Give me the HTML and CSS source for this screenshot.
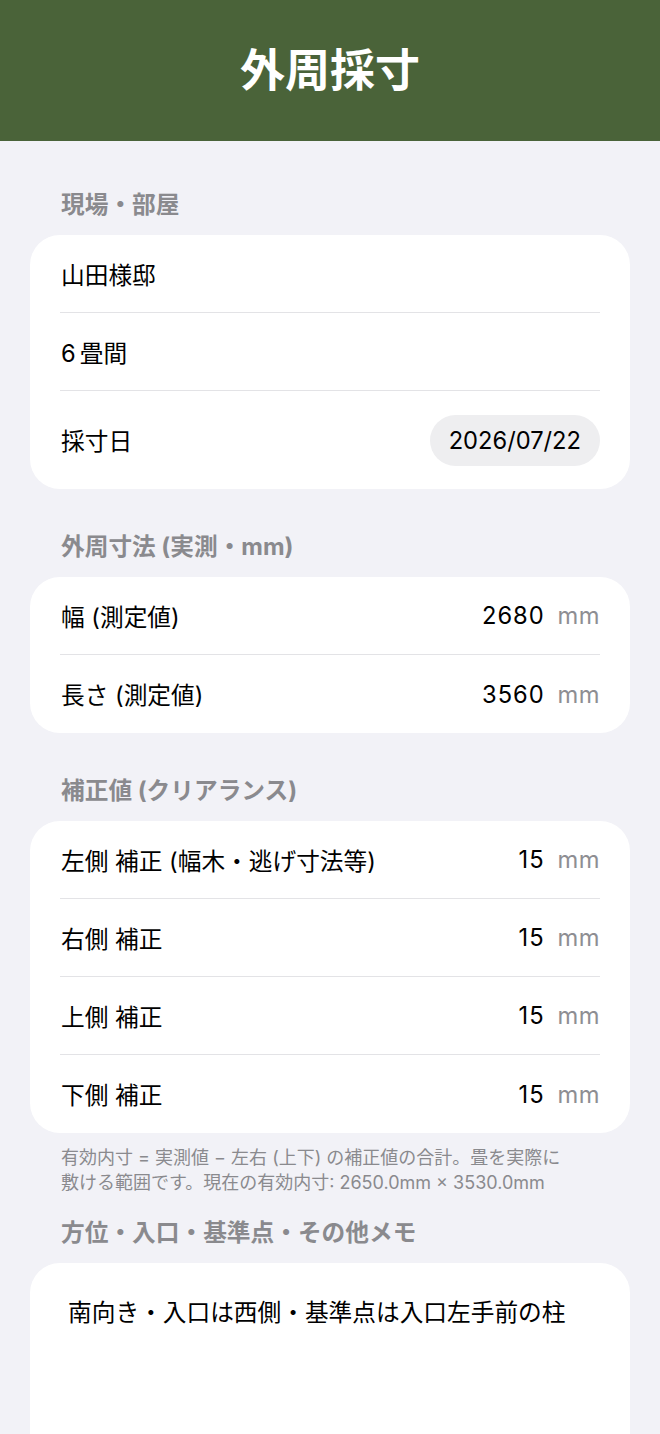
FILE: index.html
```html
<!DOCTYPE html>
<html lang="ja">
<head>
<meta charset="utf-8">
<title>外周採寸</title>
<link rel="stylesheet" href="styles.css">
</head>
<body>
<header class="topbar"><h1 class="title">外周採寸</h1></header>
<main class="content">
  <section class="group">
    <h2 class="group-title">現場・部屋</h2>
    <div class="card">
      <div class="row"><span class="label">山田様邸</span></div>
      <div class="row"><span class="label"><span class="num">6</span>畳間</span></div>
      <div class="row row-tall"><span class="label">採寸日</span><span class="pill">2026/07/22</span></div>
    </div>
  </section>
  <section class="group">
    <h2 class="group-title">外周寸法 (実測・mm)</h2>
    <div class="card">
      <div class="row"><span class="label">幅 (測定値)</span><span class="value">2680<span class="unit">mm</span></span></div>
      <div class="row"><span class="label">長さ (測定値)</span><span class="value">3560<span class="unit">mm</span></span></div>
    </div>
  </section>
  <section class="group">
    <h2 class="group-title">補正値 (クリアランス)</h2>
    <div class="card">
      <div class="row"><span class="label">左側 補正 (幅木・逃げ寸法等)</span><span class="value">15<span class="unit">mm</span></span></div>
      <div class="row"><span class="label">右側 補正</span><span class="value">15<span class="unit">mm</span></span></div>
      <div class="row"><span class="label">上側 補正</span><span class="value">15<span class="unit">mm</span></span></div>
      <div class="row"><span class="label">下側 補正</span><span class="value">15<span class="unit">mm</span></span></div>
    </div>
    <p class="note">有効内寸 = 実測値 − 左右 (上下) の補正値の合計。畳を実際に敷ける範囲です。現在の有効内寸: 2650.0mm × 3530.0mm</p>
  </section>
  <section class="group group-memo">
    <h2 class="group-title">方位・入口・基準点・その他メモ</h2>
    <div class="card memo">南向き・入口は西側・基準点は入口左手前の柱</div>
  </section>
</main>
</body>
</html>
```

FILE: styles.css
```css
* { box-sizing: border-box; }
html, body { margin: 0; padding: 0; }
body {
  background: #f2f2f7;
  font-family: "Inter", "Noto Sans CJK JP", sans-serif;
  color: #000;
  width: 660px;
  height: 1434px;
  overflow: hidden;
}
.topbar {
  height: 141px;
  background: #4a6339;
  display: flex;
  align-items: center;
  justify-content: center;
}
.title {
  margin: 0;
  color: #fff;
  font-size: 45px;
  font-weight: 700;
  line-height: 1;
}
.content {
  padding: 49px 30px 0;
}
.group { margin-bottom: 43px; }
.group-title {
  margin: 0 0 15px 31px;
  font-size: 23.7px;
  line-height: 30px;
  font-weight: 700;
  color: #8a8a8e;
}
.card {
  background: #fff;
  border-radius: 30px;
  padding: 0 30px;
}
.row {
  height: 78px;
  display: flex;
  align-items: center;
  justify-content: space-between;
  font-size: 23.7px;
  border-bottom: 1px solid #e3e3e6;
}
.row:last-child { border-bottom: none; }
.row-tall { height: 98px; }
.label { padding-left: 1px; }
.num { margin-right: 4px; }
.pill {
  background: #eeeef0;
  border-radius: 26px;
  height: 51px;
  padding: 0 19px;
  display: flex;
  align-items: center;
  font-size: 23.7px;
}
.value {
  display: flex;
  align-items: baseline;
  letter-spacing: 0.04em;
}
.unit {
  margin-left: 13px;
  color: #8e8e93;
  letter-spacing: 0.02em;
}
.note {
  margin: 12px 0 0 31px;
  padding-right: 60px;
  font-size: 18px;
  line-height: 25px;
  color: #8a8a8e;
}
.group + .group-memo { margin-top: -20px; }
.memo {
  height: 220px;
  padding: 35px 38px;
  font-size: 23.7px;
  line-height: 30px;
}
```
